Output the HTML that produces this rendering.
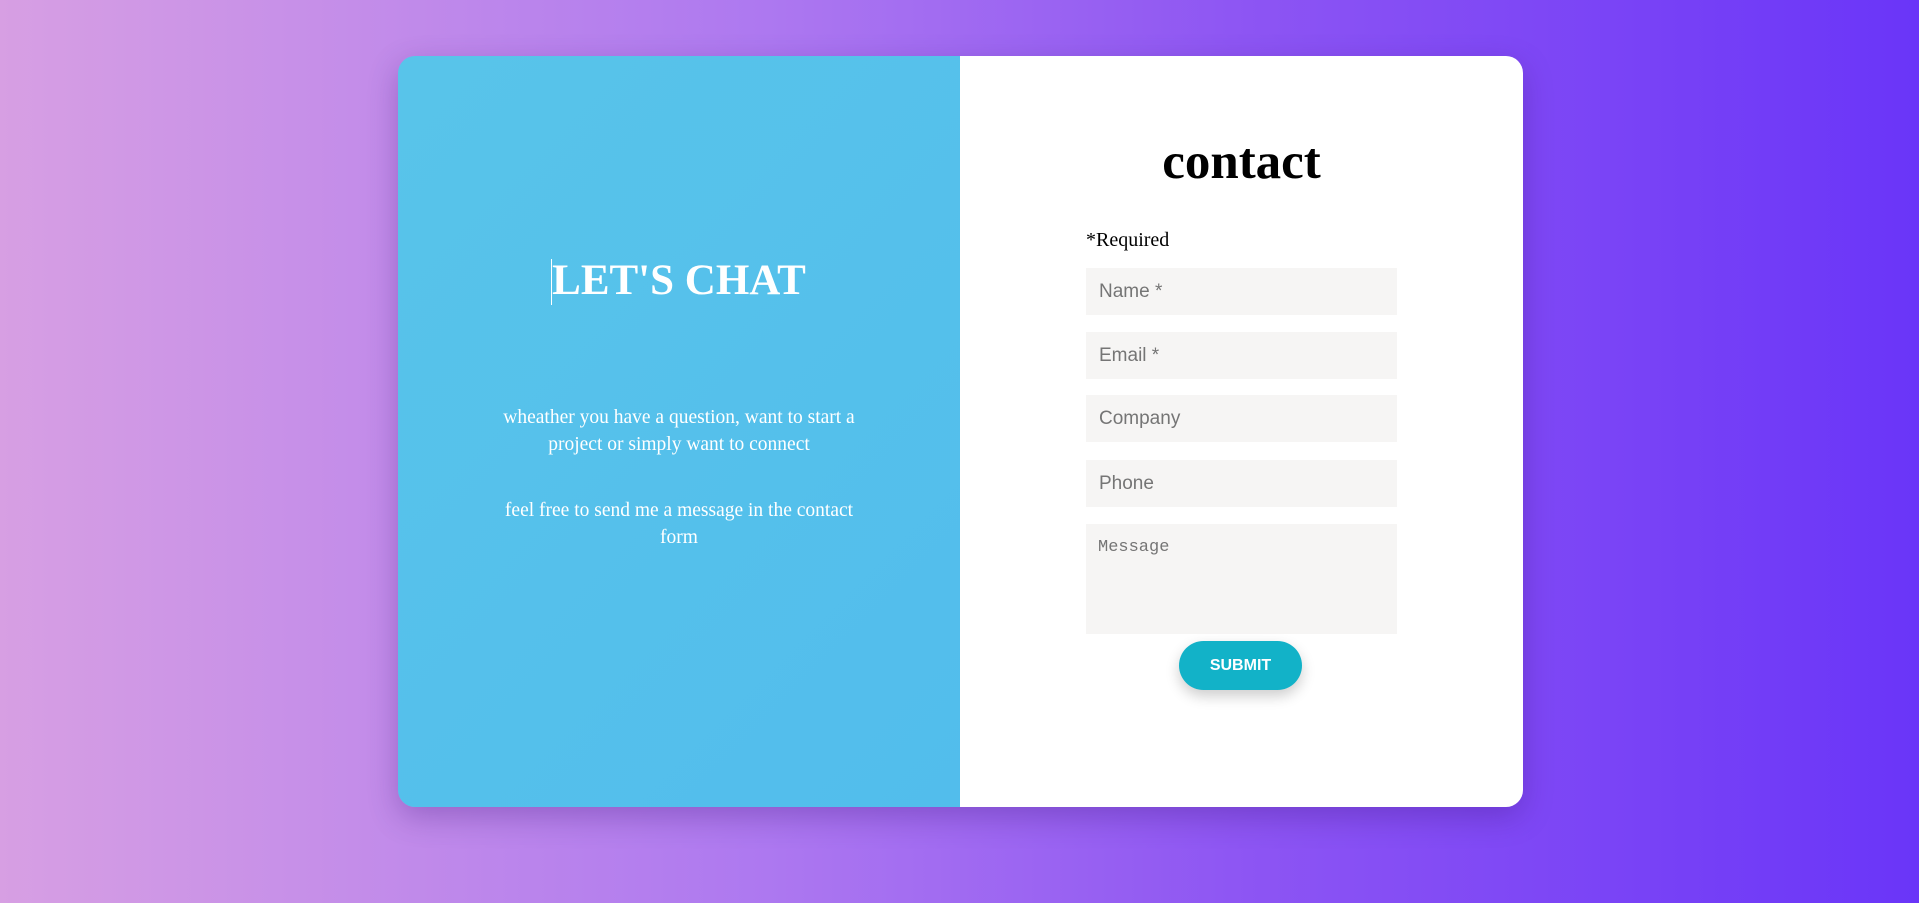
<!DOCTYPE html>
<html><head><meta charset="utf-8"><style>
*{margin:0;padding:0;box-sizing:border-box}
html,body{width:1919px;height:903px;overflow:hidden}
body{background:linear-gradient(90deg,#d79fe3 0%,#ad78f0 40%,#8d55f3 65%,#6a35f8 100%);font-family:"Liberation Serif",serif;position:relative}
.card{position:absolute;left:398px;top:56px;width:1125px;height:751px;border-radius:17px;overflow:hidden;box-shadow:0 10px 30px rgba(60,20,120,.3);display:flex}
.left{width:562px;height:100%;background:linear-gradient(135deg,#58c4ea,#52bdec);position:relative;color:#fff}
.right{flex:1;background:#fff;position:relative}
h2{position:absolute;left:0;width:562px;top:200px;text-align:center;font-size:43px;font-weight:bold;line-height:50px;padding-left:0}
.caret{position:absolute;left:153px;top:203px;width:1px;height:46px;background:#fff}
.p{position:absolute;left:91px;width:380px;text-align:center;font-size:19.5px;line-height:27px}
h1{position:absolute;left:0;width:100%;top:76px;text-align:center;font-size:51px;line-height:60px;font-weight:bold}
.req{position:absolute;left:688px;top:172px;font-size:20px;line-height:24px}
.in{position:absolute;left:688px;width:311px;height:47px;background:#f6f5f4;font-family:"Liberation Sans",sans-serif;font-size:19px;color:#757575;padding-left:13px;line-height:47px}
.msg{height:110px;font-family:"Liberation Mono",monospace;font-size:17px;line-height:20px;padding-top:14px;padding-left:12px}
.btn{position:absolute;left:781px;top:585px;width:123px;height:49px;border-radius:25px;background:#12b2c8;color:#fff;font-family:"Liberation Sans",sans-serif;font-weight:bold;font-size:16px;text-align:center;line-height:49px;box-shadow:0 6px 14px rgba(0,0,0,.2)}
</style></head><body>
<div class="card">
 <div class="left">
  <div class="caret"></div>
  <h2>LET'S CHAT</h2>
  <div class="p" style="top:348px">wheather you have a question, want to start a project or simply want to connect</div>
  <div class="p" style="top:441px">feel free to send me a message in the contact form</div>
 </div>
 <div class="right"></div>
</div>
<div style="position:absolute;left:398px;top:56px;width:1125px;height:751px">
 <h1 style="left:562px;width:563px">contact</h1>
 <div class="req">*Required</div>
 <div class="in" style="top:212px">Name *</div>
 <div class="in" style="top:276px">Email *</div>
 <div class="in" style="top:339px">Company</div>
 <div class="in" style="top:404px">Phone</div>
 <div class="in msg" style="top:468px">Message</div>
 <div class="btn">SUBMIT</div>
</div>
</body></html>
